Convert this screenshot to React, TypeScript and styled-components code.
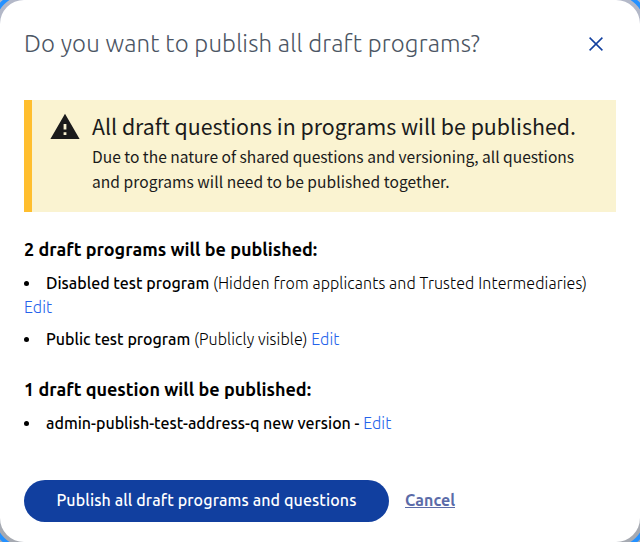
import React from "react";
import styled, { createGlobalStyle } from "styled-components";

const GlobalStyle = createGlobalStyle`
  *, *::before, *::after { box-sizing: border-box; }
  html, body { margin: 0; height: 100%; overflow: hidden; }
  body {
    font-family: Ubuntu, "Noto Sans", sans-serif;
    font-size: 16px;
    line-height: 24px;
    color: #000;
    background: linear-gradient(#b3b8c8, #a6aab2);
  }
  h1, h2, h3, p, ul { margin: 0; padding: 0; font-weight: inherit; }
`;

const Dialog = styled.main`
  width: 640px;
  height: 542px;
  padding: 24px 24px 20px;
  display: flex;
  flex-direction: column;
  background: #fff;
  border-radius: 24px;
  outline: 4px solid #2491ff;
  outline-offset: 4px;
`;

const Header = styled.header`
  display: flex;
  flex: none;
  align-items: center;
  justify-content: space-between;
  height: 40px;
`;

const Title = styled.h1`
  font-size: 24px;
  line-height: 32px;
  font-weight: 300;
  letter-spacing: 0.15px;
  color: #4b5563;
`;

const CloseButton = styled.button`
  display: flex;
  align-items: center;
  justify-content: center;
  width: 40px;
  height: 40px;
  padding: 0;
  border: 0;
  background: none;
`;

const Alert = styled.section`
  display: flex;
  flex: none;
  height: 112px;
  margin-top: 36px;
  padding: 12px 20px 12px 18px;
  border-left: 8px solid #ffbe2e;
  background: #faf3d1;
  color: #1b1b1b;
  font-family: "Source Sans Pro", "Noto Sans CJK SC", sans-serif;
`;

const AlertIcon = styled.svg`
  flex: none;
  width: 30px;
  height: 28px;
  margin-right: 12px;
`;

const AlertTitle = styled.h2`
  font-size: 21.35px;
  line-height: 28px;
  padding-bottom: 4px;
  white-space: nowrap;
`;

const AlertText = styled.p`
  font-size: 15.57px;
  line-height: 25px;
  white-space: nowrap;
`;

const AlertLine = styled.span<{ $tracking?: number }>`
  display: block;
  letter-spacing: ${(p) => p.$tracking ?? 0}px;
`;

const Section = styled.section<{ $gap: number }>`
  margin-top: ${(p) => p.$gap}px;
`;

const SectionTitle = styled.h3`
  font-size: 18px;
  line-height: 28px;
  font-weight: 600;
`;

const List = styled.ul`
  display: flex;
  flex-direction: column;
  gap: 8px;
  padding-top: 8px;
  list-style: inside;
`;

const Item = styled.li``;

const Name = styled.span`
  font-weight: 500;
`;

const Note = styled.span`
  font-weight: 300;
  letter-spacing: 0.1px;
`;

const EditLink = styled.a`
  font-weight: 300;
  letter-spacing: 0.1px;
  color: #2563eb;
`;

const Actions = styled.footer`
  display: flex;
  align-items: center;
  gap: 16px;
  margin-top: 45px;
`;

const PublishButton = styled.button`
  width: 365px;
  height: 42px;
  padding: 0 0 2px;
  border: 0;
  border-radius: 21px;
  background: #113f9f;
  color: #fff;
  font: 500 16px/24px Ubuntu, "Noto Sans", sans-serif;
  letter-spacing: 0.12px;
`;

const CancelButton = styled.button`
  padding: 0 0 2px;
  border: 0;
  background: none;
  color: #5b6ba8;
  font: 600 16px/24px Ubuntu, "Noto Sans", sans-serif;
  text-decoration: underline;
`;

export default function App() {
  return (
    <>
      <GlobalStyle />
      <Dialog>
        <Header>
          <Title>Do you want to publish all draft programs?</Title>
          <CloseButton aria-label="Close">
            <svg width="14" height="14" viewBox="0 0 14 14" fill="none" stroke="#113f9f" strokeWidth="1.5">
              <path d="M.6.6l12.8 12.8M13.4.6L.6 13.4" />
            </svg>
          </CloseButton>
        </Header>

        <Alert>
          <AlertIcon viewBox="0 0 30 28">
            <path fill="#1b1b1b" fillRule="evenodd" d="M.4 27L15 1.8 29.6 27zM13.6 12h2.8v5.4h-2.8zM13.6 20.2h2.8V23h-2.8z" />
          </AlertIcon>
          <div>
            <AlertTitle>All draft questions in programs will be published.</AlertTitle>
            <AlertText>
              <AlertLine>Due to the nature of shared questions and versioning, all questions</AlertLine>
              <AlertLine $tracking={0.05}>and programs will need to be published together.</AlertLine>
            </AlertText>
          </div>
        </Alert>

        <Section $gap={23}>
          <SectionTitle>2 draft programs will be published:</SectionTitle>
          <List>
            <Item>
              <Name>Disabled test program</Name>{" "}
              <Note>(Hidden from applicants and Trusted Intermediaries)</Note>{" "}
              <EditLink>Edit</EditLink>
            </Item>
            <Item>
              <Name>Public test program</Name> <Note>(Publicly visible)</Note> <EditLink>Edit</EditLink>
            </Item>
          </List>
        </Section>

        <Section $gap={24}>
          <SectionTitle>1 draft question will be published:</SectionTitle>
          <List>
            <Item>
              <Name>admin-publish-test-address-q new version -</Name> <EditLink>Edit</EditLink>
            </Item>
          </List>
        </Section>

        <Actions>
          <PublishButton>Publish all draft programs and questions</PublishButton>
          <CancelButton>Cancel</CancelButton>
        </Actions>
      </Dialog>
    </>
  );
}
